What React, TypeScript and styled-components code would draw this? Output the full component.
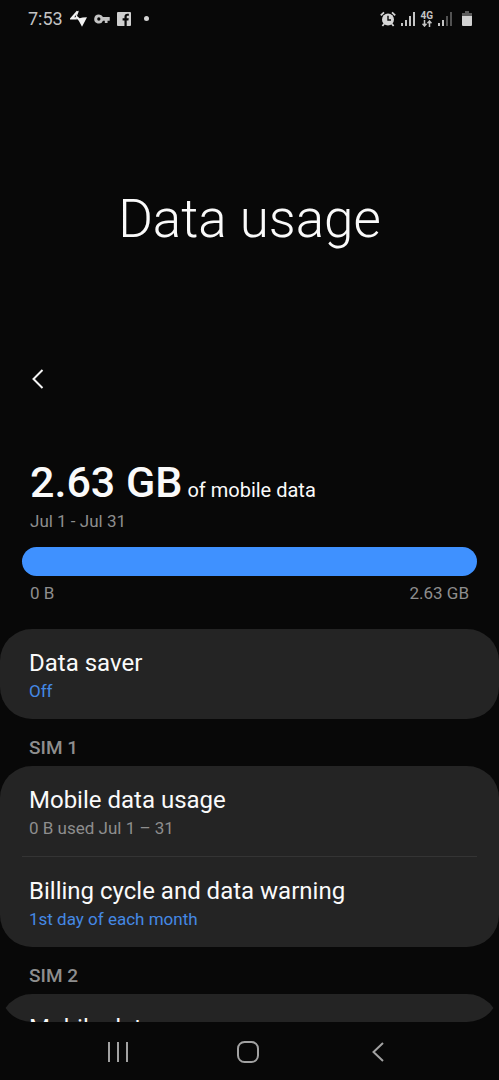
import React from 'react';
import styled, { createGlobalStyle } from 'styled-components';

const GlobalStyle = createGlobalStyle`
  * { box-sizing: border-box; }
  body {
    margin: 0;
    background: #080808;
    color: #fafafa;
    font-family: Roboto, "Liberation Sans", sans-serif;
  }
  h1, h2, h3, p { margin: 0; font-weight: 400; }
  button { border: 0; padding: 0; background: none; color: inherit; font: inherit; }
  svg { display: block; }
`;

const Screen = styled.div`
  display: flex;
  flex-direction: column;
  height: 100vh;
  background: #080808;
`;

const StatusBar = styled.header`
  display: flex;
  flex: none;
  align-items: center;
  justify-content: space-between;
  height: 37px;
  padding: 0 27px 0 28px;
  color: #c4c4c4;
`;

const StatusGroup = styled.div<{ $gap: number }>`
  display: flex;
  align-items: center;
  gap: ${({ $gap }) => $gap}px;
`;

const Clock = styled.span`
  font-size: 18px;
  line-height: 20px;
`;

const Dot = styled.span`
  width: 5px;
  height: 5px;
  margin-left: 6px;
  border-radius: 50%;
  background: #d4d4d4;
`;

const Network = styled.span`
  display: flex;
  flex-direction: column;
  align-items: center;
  font-size: 10px;
  font-weight: 700;
  line-height: 9px;
`;

const BatterySlot = styled.span`
  padding-left: 5px;
`;

const Content = styled.main`
  flex: 1;
  min-height: 0;
  overflow: hidden;
  border-radius: 0 0 32px 32px;
`;

const Hero = styled.div`
  display: flex;
  align-items: center;
  justify-content: center;
  height: 310px;
  padding-top: 53px;
`;

const Title = styled.h1`
  font-size: 53px;
  font-weight: 300;
  line-height: 64px;
`;

const Toolbar = styled.div`
  display: flex;
  align-items: center;
  height: 64px;
  padding-left: 24px;
`;

const IconButton = styled.button`
  display: flex;
  align-items: center;
  justify-content: center;
  width: 28px;
  height: 32px;
`;

const Usage = styled.section`
  padding: 45px 22px 24px;
`;

const Amount = styled.p`
  display: flex;
  align-items: baseline;
  gap: 5px;
  padding-left: 8px;
  font-size: 20px;
  line-height: 24px;
`;

const AmountValue = styled.strong`
  font-size: 43px;
  font-weight: 500;
  line-height: 53px;
`;

const Caption = styled.p`
  padding-left: 8px;
  color: #8e8e8e;
  font-size: 17px;
  line-height: 24px;
`;

const Bar = styled.div`
  height: 29px;
  margin: 14px 0 5px;
  border-radius: 15px;
  background: #3f91ff;
`;

const Range = styled.div`
  display: flex;
  justify-content: space-between;
  padding: 0 8px;
  color: #8e8e8e;
  font-size: 17px;
  line-height: 24px;
`;

const Card = styled.section`
  padding: 0 22px;
  border-radius: 32px;
  background: #242424;
`;

const Row = styled.button`
  display: block;
  width: 100%;
  height: 90px;
  padding: 2px 7px 0;
  text-align: left;

  & + & {
    height: 91px;
    border-top: 1px solid #343434;
  }
`;

const RowTitle = styled.span`
  display: block;
  font-size: 24px;
  line-height: 32px;
`;

const RowNote = styled.span<{ $accent?: boolean }>`
  display: block;
  color: ${({ $accent }) => ($accent ? '#4489e4' : '#8e8e8e')};
  font-size: 17px;
  line-height: 24px;
`;

const SectionLabel = styled.h2`
  padding: 17px 29px 6px;
  color: #8e8e8e;
  font-size: 19px;
  font-weight: 500;
  line-height: 24px;
`;

const NavBar = styled.nav`
  display: flex;
  flex: none;
  align-items: center;
  justify-content: center;
  gap: 102px;
  height: 58px;
  padding: 2px 4px 0 0;
  color: #a2a2a2;
`;

const Bolt = () => (
  <svg width="17" height="18" viewBox="0 0 17 18" aria-hidden="true">
    <path d="M7.6 1.6 1.6 8.4h5.2" fill="none" stroke="#f2f2f2" strokeWidth="2.2" />
    <path d="M7.2 1.2 8.8 .8 7 6l2.6 2.2 3-.6 4.4-.4-5 9.6-3.2-6L5.6 7.6Z" fill="#f2f2f2" />
  </svg>
);

const VpnKey = () => (
  <svg width="16" height="10" viewBox="0 0 17 11" fill="currentColor" aria-hidden="true">
    <path
      fillRule="evenodd"
      d="M5 .5a5 5 0 1 0 4.6 6.8h2V10h3V7.3H17v-4H9.6A5 5 0 0 0 5 .5Zm0 3.2a1.8 1.8 0 1 1 0 3.6 1.8 1.8 0 0 1 0-3.6Z"
    />
  </svg>
);

const Facebook = () => (
  <svg width="14" height="14" viewBox="0 0 15 15" aria-hidden="true">
    <rect width="15" height="15" rx="1" fill="#cfcfcf" />
    <path d="M8 15V9H6V6.7h2V5c0-2 1.2-3.2 3.1-3.2h1.6V4h-1.1c-.9 0-1.2.4-1.2 1.2v1.5h2.2L12.2 9h-1.8v6Z" fill="#080808" />
  </svg>
);

const Alarm = () => (
  <svg width="16" height="16" viewBox="0 0 16 16" aria-hidden="true">
    <circle cx="8" cy="8.5" r="6" fill="#d6d6d6" />
    <path d="M.8 4.4 4 1.4M15.2 4.4 12 1.4M4.2 12.8 2.4 15M11.8 12.8 13.6 15" stroke="#d6d6d6" strokeWidth="1.8" />
    <path d="M8 4.8v4.2h3" fill="none" stroke="#080808" strokeWidth="1.4" />
  </svg>
);

const Signal = ({ level }: { level: number }) => (
  <svg width="14" height="15" viewBox="0 0 14 15" fill="currentColor" aria-hidden="true">
    {[3, 6, 10, 14].map((height, i) => (
      <rect key={height} x={i * 4} y={15 - height} width="2" height={height} opacity={i < level ? 1 : 0.4} />
    ))}
  </svg>
);

const Arrows = () => (
  <svg width="10" height="7" viewBox="0 0 10 7" fill="none" stroke="currentColor" strokeWidth="1.5" aria-hidden="true">
    <path d="M2.5 0v6M.5 3.8l2 2.2 2-2.2M7.5 7V1M5.5 3.2l2-2.2 2 2.2" />
  </svg>
);

const Battery = () => (
  <svg width="10" height="15" viewBox="0 0 10 15" aria-hidden="true">
    <path d="M3 0h4v2h3v4H0V2h3Z" fill="#5c5c5c" />
    <path d="M0 5h10v9a1 1 0 0 1-1 1H1a1 1 0 0 1-1-1Z" fill="#d2d2d2" />
  </svg>
);

const BackArrow = () => (
  <svg width="12" height="20" viewBox="0 0 12 20" fill="none" stroke="#f4f4f4" strokeWidth="2" aria-hidden="true">
    <path d="M10.5 1 1.5 10l9 9" />
  </svg>
);

const Recents = () => (
  <svg width="20" height="20" viewBox="0 0 20 20" fill="currentColor" aria-hidden="true">
    <path d="M0 0h2v20H0ZM9 0h2v20H9ZM18 0h2v20h-2Z" />
  </svg>
);

const Home = () => (
  <svg width="22" height="22" viewBox="0 0 22 22" fill="none" stroke="currentColor" strokeWidth="2" aria-hidden="true">
    <rect x="1" y="1" width="20" height="20" rx="6.5" />
  </svg>
);

const NavBack = () => (
  <svg width="12" height="20" viewBox="0 0 12 20" fill="none" stroke="currentColor" strokeWidth="2" aria-hidden="true">
    <path d="M11 1 1.5 10l9.5 9" />
  </svg>
);

export default function App() {
  return (
    <Screen>
      <GlobalStyle />
      <StatusBar>
        <StatusGroup $gap={7}>
          <Clock>7:53</Clock>
          <Bolt />
          <VpnKey />
          <Facebook />
          <Dot />
        </StatusGroup>
        <StatusGroup $gap={5}>
          <Alarm />
          <Signal level={4} />
          <Network>
            4G
            <Arrows />
          </Network>
          <Signal level={2} />
          <BatterySlot>
            <Battery />
          </BatterySlot>
        </StatusGroup>
      </StatusBar>
      <Content>
        <Hero>
          <Title>Data usage</Title>
        </Hero>
        <Toolbar>
          <IconButton type="button" aria-label="Navigate up">
            <BackArrow />
          </IconButton>
        </Toolbar>
        <Usage>
          <Amount>
            <AmountValue>2.63 GB</AmountValue> of mobile data
          </Amount>
          <Caption>Jul 1 - Jul 31</Caption>
          <Bar />
          <Range>
            <span>0 B</span>
            <span>2.63 GB</span>
          </Range>
        </Usage>
        <Card>
          <Row type="button">
            <RowTitle>Data saver</RowTitle>
            <RowNote $accent>Off</RowNote>
          </Row>
        </Card>
        <SectionLabel>SIM 1</SectionLabel>
        <Card>
          <Row type="button">
            <RowTitle>Mobile data usage</RowTitle>
            <RowNote>0 B used Jul 1 – 31</RowNote>
          </Row>
          <Row type="button">
            <RowTitle>Billing cycle and data warning</RowTitle>
            <RowNote $accent>1st day of each month</RowNote>
          </Row>
        </Card>
        <SectionLabel>SIM 2</SectionLabel>
        <Card>
          <Row type="button">
            <RowTitle>Mobile data</RowTitle>
            <RowNote>On</RowNote>
          </Row>
        </Card>
      </Content>
      <NavBar>
        <IconButton type="button" aria-label="Recent apps">
          <Recents />
        </IconButton>
        <IconButton type="button" aria-label="Home">
          <Home />
        </IconButton>
        <IconButton type="button" aria-label="Back">
          <NavBack />
        </IconButton>
      </NavBar>
    </Screen>
  );
}
